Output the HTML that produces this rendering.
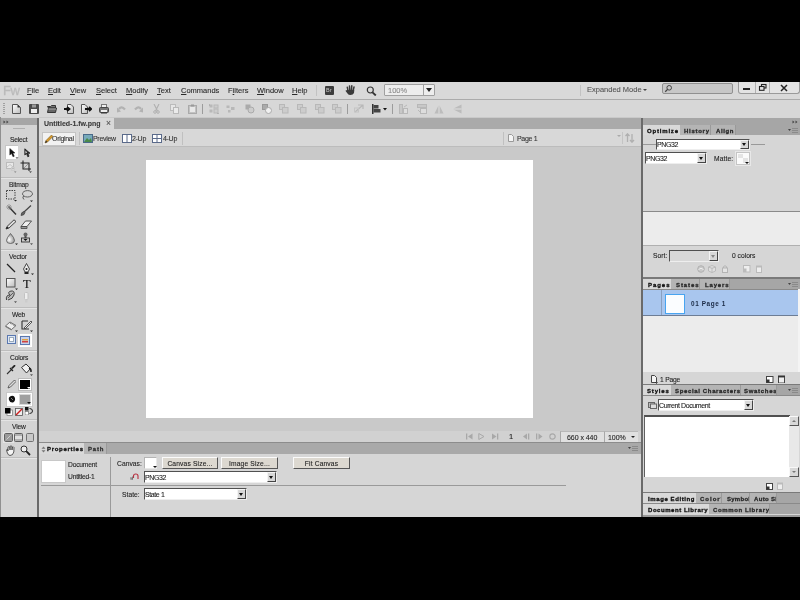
<!DOCTYPE html><html><head><meta charset="utf-8"><style>
*{margin:0;padding:0;box-sizing:border-box}
html,body{width:800px;height:600px;overflow:hidden;background:#000;font-family:"Liberation Sans",sans-serif;font-size:7.5px;color:#2a2a2a}
div,span,svg{position:absolute}
span.u{position:static;text-decoration:underline}
.t{line-height:1;white-space:nowrap;will-change:transform;-webkit-text-stroke:0.1px currentColor}
.b{font-weight:bold}
.c{font-size:6.7px;letter-spacing:-0.2px}
.tab{will-change:transform;position:absolute;font-weight:bold;font-size:6px;letter-spacing:0.8px;line-height:1;white-space:nowrap;color:#111;-webkit-text-stroke:0.3px currentColor}
</style></head><body>
<div style="left:0px;top:82px;width:800px;height:435px;background:#d5d5d5"></div>
<div style="left:0px;top:82px;width:800px;height:17px;background:#d9d9d9"></div>
<div style="left:0px;top:99px;width:800px;height:1px;background:#ababab"></div>
<div class="t" style="left:2.5px;top:83.6px;font-size:13px;color:#bababa;letter-spacing:-0.4px;-webkit-text-stroke:0.3px #bababa">Fw</div>
<div class="t" style="left:27px;top:86.7px;color:#2a2a2a"><span class="u">F</span>ile</div>
<div class="t" style="left:48px;top:86.7px;color:#2a2a2a"><span class="u">E</span>dit</div>
<div class="t" style="left:70px;top:86.7px;color:#2a2a2a"><span class="u">V</span>iew</div>
<div class="t" style="left:96px;top:86.7px;color:#2a2a2a"><span class="u">S</span>elect</div>
<div class="t" style="left:126px;top:86.7px;color:#2a2a2a"><span class="u">M</span>odify</div>
<div class="t" style="left:157px;top:86.7px;color:#2a2a2a"><span class="u">T</span>ext</div>
<div class="t" style="left:181px;top:86.7px;color:#2a2a2a"><span class="u">C</span>ommands</div>
<div class="t" style="left:228px;top:86.7px;color:#2a2a2a">F<span class="u">i</span>lters</div>
<div class="t" style="left:257px;top:86.7px;color:#2a2a2a"><span class="u">W</span>indow</div>
<div class="t" style="left:292px;top:86.7px;color:#2a2a2a"><span class="u">H</span>elp</div>
<div style="left:316px;top:85px;width:1px;height:11px;background:#c2c2c2"></div>
<div style="left:325px;top:86px;width:9px;height:9px;background:#3c3c3c;border-radius:1px"></div>
<div class="t" style="left:326.3px;top:88.2px;font-size:5.5px;color:#c8c8c8;-webkit-text-stroke:0">Br</div>
<svg style="left:345px;top:85px" width="11" height="11" viewBox="0 0 11 11"><path d="M3 5.5 L2.3 2.2 M4.8 5 L4.5 1 M6.5 5 L6.8 0.8 M8.2 5.5 L9 2" stroke="#3a3a3a" stroke-width="1.5" fill="none" stroke-linecap="round"/><path d="M2.5 5 L9.3 5 L9 8 Q8 10 5.5 10 Q3.5 10 2.5 8.5 L0.6 6 Q0.5 5 1.5 5.2Z" fill="#3a3a3a"/></svg>
<svg style="left:366px;top:86px" width="11" height="10" viewBox="0 0 11 10"><circle cx="4.3" cy="4" r="3" stroke="#333" stroke-width="1.15" fill="none"/><path d="M6.5 6.3 L9.8 9.5" stroke="#333" stroke-width="1.8"/></svg>
<div style="left:384px;top:84px;width:51px;height:12px;background:#ededed;border:1px solid #a0a0a0;border-radius:1px"></div>
<div class="t" style="left:388px;top:86.5px;color:#8a8a8a">100%</div>
<div style="left:423px;top:85px;width:1px;height:10px;background:#a0a0a0"></div>
<div style="left:426px;top:88px;width:0px;height:0px;border-left:3px solid transparent;border-right:3px solid transparent;border-top:4px solid #222"></div>
<div style="left:580px;top:85px;width:1px;height:11px;background:#c2c2c2"></div>
<div class="t" style="left:587px;top:86px;color:#555">Expanded Mode</div>
<div style="left:643px;top:89px;width:0px;height:0px;border-left:2px solid transparent;border-right:2px solid transparent;border-top:2px solid #444"></div>
<div style="left:662px;top:83px;width:71px;height:11px;background:#c7c7c7;border:1px solid #909090;border-radius:2px"></div>
<svg style="left:664px;top:84px" width="9" height="9" viewBox="0 0 9 9"><circle cx="5.2" cy="3.8" r="2.3" stroke="#444" stroke-width="1" fill="none"/><path d="M3.6 5.4 L1.2 7.8" stroke="#444" stroke-width="1.3"/></svg>
<div style="left:738px;top:82px;width:62px;height:12px;background:#e3e3e3;border:1px solid #9a9a9a;border-top:none;border-radius:0 0 3px 3px"></div>
<div style="left:755px;top:82px;width:1px;height:11px;background:#b0b0b0"></div>
<div style="left:769px;top:82px;width:1px;height:11px;background:#b0b0b0"></div>
<div style="left:743px;top:88px;width:7px;height:2px;background:#222"></div>
<svg style="left:758px;top:83px" width="9" height="9" viewBox="0 0 9 9"><rect x="3.5" y="1.5" width="4.5" height="3.5" stroke="#222" stroke-width="1.1" fill="none"/><rect x="1.5" y="3.5" width="4.5" height="3.8" stroke="#222" stroke-width="1.1" fill="#e3e3e3"/></svg>
<svg style="left:780px;top:84px" width="8" height="8" viewBox="0 0 8 8"><path d="M1 1 L7 7 M7 1 L1 7" stroke="#222" stroke-width="1.5"/></svg>
<div style="left:0px;top:100px;width:800px;height:17px;background:#d7d7d7"></div>
<div style="left:3px;top:103px;width:2px;height:11px;background:repeating-linear-gradient(#a0a0a0 0 1px,transparent 1px 2px)"></div>
<svg style="left:0;top:0" width="1" height="1"><defs><linearGradient id="pg" x1="0" y1="0" x2="1" y2="1"><stop offset="0" stop-color="#fff"/><stop offset="1" stop-color="#bbb"/></linearGradient></defs></svg>
<svg style="left:12px;top:104px" width="9" height="10" viewBox="0 0 9 10"><path d="M0.5 0.5 L5.5 0.5 L8.5 3.5 L8.5 9.5 L0.5 9.5Z" fill="url(#pg)" stroke="#555" stroke-width="1"/><path d="M5.5 0.5 L8.5 3.5 L5.5 3.5Z" fill="#333"/></svg>
<svg style="left:29px;top:104px" width="10" height="10" viewBox="0 0 10 10"><rect x="0" y="0" width="10" height="10" rx="1" fill="#4a4a4a"/><rect x="2" y="5" width="6" height="4" fill="#eee"/><rect x="3" y="0.5" width="4" height="3" fill="#999"/></svg>
<svg style="left:47px;top:105px" width="10" height="8" viewBox="0 0 10 8"><path d="M0.5 1.5 L3.5 1.5 L4.5 0.5 L8.5 0.5 L8.5 3 L1.5 3Z" fill="#777" stroke="#333"/><path d="M0.5 7.5 L1.5 3 L9.5 3 L8.5 7.5Z" fill="#666" stroke="#333"/><path d="M1.5 4 L9 4" stroke="#aaa"/></svg>
<svg style="left:64px;top:104px" width="10" height="10" viewBox="0 0 10 10"><path d="M3.5 0.5 L7 0.5 L9.5 3 L9.5 9.5 L3.5 9.5Z" fill="url(#pg)" stroke="#555"/><path d="M0 5 L4.5 5 M3 3 L5.5 5 L3 7" stroke="#111" stroke-width="1.8" fill="none"/></svg>
<svg style="left:81px;top:104px" width="11" height="10" viewBox="0 0 11 10"><path d="M0.5 0.5 L4 0.5 L6.5 3 L6.5 9.5 L0.5 9.5Z" fill="url(#pg)" stroke="#555"/><path d="M4 5 L9.5 5 M8 3 L10.3 5 L8 7" stroke="#111" stroke-width="1.8" fill="none"/></svg>
<svg style="left:99px;top:104px" width="10" height="10" viewBox="0 0 10 10"><rect x="2.5" y="0.5" width="5" height="4" fill="#eee" stroke="#777"/><rect x="0.5" y="3.5" width="9" height="5" rx="1" fill="#777" stroke="#444"/><rect x="2" y="6" width="6" height="2" fill="#eee"/><rect x="2" y="8.5" width="6" height="1" fill="#333"/></svg>
<svg style="left:117px;top:105px" width="9" height="8" viewBox="0 0 9 8"><path d="M2 4 Q4.5 0.5 8 4.5" stroke="#b2b2b2" stroke-width="2.2" fill="none"/><path d="M0 2.5 L4 6.5 L0 7.5Z" fill="#b2b2b2"/></svg>
<svg style="left:134px;top:105px" width="9" height="8" viewBox="0 0 9 8"><path d="M7 4 Q4.5 0.5 1 4.5" stroke="#b2b2b2" stroke-width="2.2" fill="none"/><path d="M9 2.5 L5 6.5 L9 7.5Z" fill="#b2b2b2"/></svg>
<svg style="left:153px;top:104px" width="7" height="10" viewBox="0 0 7 10"><path d="M1 0 L4.5 7 M6 0 L2.5 7" stroke="#b0b0b0" stroke-width="1.1"/><circle cx="2" cy="8" r="1.3" stroke="#b0b0b0" fill="none"/><circle cx="5" cy="8" r="1.3" stroke="#b0b0b0" fill="none"/></svg>
<svg style="left:170px;top:104px" width="9" height="10" viewBox="0 0 9 10"><rect x="0.5" y="0.5" width="5" height="6" fill="#e6e6e6" stroke="#bbb"/><rect x="3.5" y="3.5" width="5" height="6" fill="#eaeaea" stroke="#b8b8b8"/></svg>
<svg style="left:188px;top:104px" width="9" height="10" viewBox="0 0 9 10"><rect x="0.5" y="1.5" width="8" height="8" fill="#c2c2c2" stroke="#aaa"/><rect x="2" y="3" width="5" height="5" fill="#e8e8e8"/><rect x="3" y="0.5" width="3" height="2" fill="#999"/></svg>
<div style="left:202px;top:104px;width:1px;height:10px;background:#9c9c9c"></div>
<svg style="left:209px;top:104px" width="10" height="10" viewBox="0 0 10 10"><rect x="0.5" y="0.5" width="3" height="3" fill="#b8b8b8"/><rect x="5" y="1" width="4" height="3" fill="#ccc" stroke="#b8b8b8"/><rect x="0.5" y="5.5" width="3" height="3" fill="#b8b8b8"/><rect x="5" y="5" width="4" height="4" fill="#ccc" stroke="#b8b8b8"/><path d="M0 0 L0 2 M10 10 L8 10" stroke="#999"/></svg>
<svg style="left:226px;top:104px" width="10" height="10" viewBox="0 0 10 10"><rect x="0.5" y="1.5" width="3" height="2.5" fill="#b8b8b8"/><rect x="5" y="3" width="3.5" height="3" fill="#b8b8b8"/><rect x="2" y="6" width="2.5" height="2.5" fill="#b8b8b8"/></svg>
<svg style="left:245px;top:104px" width="10" height="10" viewBox="0 0 10 10"><rect x="0.5" y="0.5" width="5" height="5" fill="#aaa"/><circle cx="6" cy="6" r="3" fill="#ccc" stroke="#aaa"/></svg>
<svg style="left:262px;top:104px" width="10" height="10" viewBox="0 0 10 10"><rect x="0.5" y="0.5" width="5" height="5" fill="#aaa" stroke="#999"/><circle cx="6.5" cy="6.5" r="3" fill="#f0f0f0" stroke="#aaa"/></svg>
<svg style="left:279px;top:104px" width="10" height="10" viewBox="0 0 10 10"><rect x="0.5" y="0.5" width="5" height="5" fill="#ccc" stroke="#b8b8b8"/><rect x="3.5" y="3.5" width="5.5" height="5.5" fill="#ccc" stroke="#b8b8b8"/></svg>
<svg style="left:297px;top:104px" width="10" height="10" viewBox="0 0 10 10"><rect x="0.5" y="0.5" width="5" height="5" fill="#ccc" stroke="#b8b8b8"/><rect x="3.5" y="3.5" width="5.5" height="5.5" fill="#ccc" stroke="#b8b8b8"/></svg>
<svg style="left:315px;top:104px" width="10" height="10" viewBox="0 0 10 10"><rect x="0.5" y="0.5" width="5" height="5" fill="#ccc" stroke="#b8b8b8"/><rect x="3.5" y="3.5" width="5.5" height="5.5" fill="#ccc" stroke="#b8b8b8"/></svg>
<svg style="left:332px;top:104px" width="10" height="10" viewBox="0 0 10 10"><rect x="0.5" y="0.5" width="5" height="5" fill="#ccc" stroke="#b8b8b8"/><rect x="3.5" y="3.5" width="5.5" height="5.5" fill="#ccc" stroke="#b8b8b8"/></svg>
<div style="left:347px;top:104px;width:1px;height:10px;background:#9c9c9c"></div>
<svg style="left:354px;top:104px" width="10" height="10" viewBox="0 0 10 10"><path d="M1 8 L9 1 M4 1 L9 1 L9 5" stroke="#b8b8b8" stroke-width="1.2" fill="none"/><rect x="0.5" y="4" width="4" height="4" fill="none" stroke="#c4c4c4"/></svg>
<svg style="left:372px;top:104px" width="15" height="10" viewBox="0 0 15 10"><rect x="0" y="0" width="1.5" height="10" fill="#333"/><rect x="1.5" y="1" width="5" height="3.5" fill="#444"/><rect x="1.5" y="5" width="7" height="3.5" fill="#444"/><path d="M11 4 L15 4 L13 6.5Z" fill="#111"/></svg>
<div style="left:392px;top:104px;width:1px;height:10px;background:#9c9c9c"></div>
<svg style="left:399px;top:104px" width="10" height="10" viewBox="0 0 10 10"><rect x="0.5" y="0.5" width="3" height="9" fill="#c8c8c8" stroke="#b8b8b8"/><rect x="4.5" y="4.5" width="4" height="5" fill="#ddd" stroke="#b8b8b8"/><path d="M5 3 L8 1" stroke="#b8b8b8"/></svg>
<svg style="left:417px;top:104px" width="10" height="10" viewBox="0 0 10 10"><rect x="0.5" y="0.5" width="9" height="3" fill="#c8c8c8" stroke="#b8b8b8"/><rect x="3.5" y="4.5" width="6" height="5" fill="#ddd" stroke="#b8b8b8"/><path d="M1 6 L3 8" stroke="#b8b8b8"/></svg>
<svg style="left:434px;top:104px" width="10" height="10" viewBox="0 0 10 10"><path d="M5 0.5 L9.5 9.5 L0.5 9.5Z" fill="#bcbcbc"/><path d="M5 0.5 L5 9.5" stroke="#e0e0e0"/></svg>
<svg style="left:452px;top:104px" width="10" height="10" viewBox="0 0 10 10"><path d="M9.5 0.5 L0.5 5 L9.5 9.5Z" fill="#bcbcbc"/><path d="M0.5 5 L9.5 5" stroke="#e0e0e0"/></svg>
<div style="left:0px;top:117px;width:37px;height:400px;background:#d4d4d4"></div>
<div style="left:0px;top:118px;width:37px;height:7px;background:#a6a6a6"></div>
<div style="left:0px;top:117px;width:1px;height:400px;background:#909090"></div>
<svg style="left:3px;top:120px" width="6" height="4" viewBox="0 0 6 4"><path d="M0.5 0.5 L2.5 2 L0.5 3.5Z M3.5 0.5 L5.5 2 L3.5 3.5Z" fill="#444"/></svg>
<div style="left:13px;top:128px;width:12px;height:1px;background:#b0b0b0"></div>
<div class="t" style="left:9.5px;top:136.5px;color:#1e1e1e;font-size:6.7px;letter-spacing:-0.2px">Select</div>
<div class="t" style="left:8.5px;top:182.0px;color:#1e1e1e;font-size:6.7px;letter-spacing:-0.2px">Bitmap</div>
<div class="t" style="left:8.5px;top:254.0px;color:#1e1e1e;font-size:6.7px;letter-spacing:-0.2px">Vector</div>
<div class="t" style="left:11.5px;top:312.0px;color:#1e1e1e;font-size:6.7px;letter-spacing:-0.2px">Web</div>
<div class="t" style="left:9.5px;top:355.0px;color:#1e1e1e;font-size:6.7px;letter-spacing:-0.2px">Colors</div>
<div class="t" style="left:11.5px;top:424.0px;color:#1e1e1e;font-size:6.7px;letter-spacing:-0.2px">View</div>
<div style="left:1px;top:177px;width:36px;height:1px;background:#bdbdbd"></div>
<div style="left:1px;top:178px;width:36px;height:1px;background:#e4e4e4"></div>
<div style="left:1px;top:249px;width:36px;height:1px;background:#bdbdbd"></div>
<div style="left:1px;top:250px;width:36px;height:1px;background:#e4e4e4"></div>
<div style="left:1px;top:307px;width:36px;height:1px;background:#bdbdbd"></div>
<div style="left:1px;top:308px;width:36px;height:1px;background:#e4e4e4"></div>
<div style="left:1px;top:350px;width:36px;height:1px;background:#bdbdbd"></div>
<div style="left:1px;top:351px;width:36px;height:1px;background:#e4e4e4"></div>
<div style="left:1px;top:419px;width:36px;height:1px;background:#bdbdbd"></div>
<div style="left:1px;top:420px;width:36px;height:1px;background:#e4e4e4"></div>
<div style="left:1px;top:457px;width:36px;height:1px;background:#bdbdbd"></div>
<div style="left:1px;top:458px;width:36px;height:1px;background:#e4e4e4"></div>
<div style="left:37px;top:118px;width:2px;height:399px;background:#6a6a6a"></div>
<div style="left:5px;top:145px;width:13px;height:14px;background:#fff;border-top:1px solid #c6c6c6;border-left:1px solid #c6c6c6"></div>
<svg style="left:8.5px;top:148px" width="10" height="11" viewBox="0 0 10 11"><path d="M0.8 0.5 L0.8 7 L2.5 5.5 L4 8.8 L5.3 8.2 L3.9 5 L6 5Z" fill="#111" stroke="#222" stroke-width="0.5"/><path d="M6.5 9.5 L9.5 9.5 L8 10.8Z" fill="#222"/></svg>
<svg style="left:23.5px;top:148px" width="7" height="10" viewBox="0 0 7 10"><path d="M0.8 0.8 L0.8 7 L2.5 5.6 L3.8 8.8 L5 8.2 L3.8 5.2 L6 5.2Z" fill="#333" stroke="#111" stroke-width="0.7"/><path d="M1.5 2.5 L1.5 5.5 L3 4.5Z" fill="#eee"/></svg>
<svg style="left:6px;top:162px" width="11" height="11" viewBox="0 0 11 11"><rect x="0.5" y="0.5" width="7" height="6" fill="#e8e8e8" stroke="#bbb"/><path d="M1 5 L4 2.5 L7 5" stroke="#c4c4c4" fill="none"/><rect x="5.5" y="5.5" width="3" height="3" fill="none" stroke="#ccc"/><path d="M8 9.5 L10.5 9.5 L9.2 10.8Z" fill="#777"/></svg>
<svg style="left:20px;top:160px" width="12" height="13" viewBox="0 0 12 13"><path d="M3 0.5 L3 9 L11 9 M0.5 3 L9 3 L9 11" stroke="#222" stroke-width="1.05" fill="none"/><path d="M4 8 L8 4" stroke="#888" stroke-width="0.8"/><path d="M9 11.5 L12 11.5 L10.5 12.8Z" fill="#222"/></svg>
<svg style="left:6px;top:190px" width="11" height="12" viewBox="0 0 11 12"><rect x="0.5" y="0.5" width="8.5" height="8.5" fill="none" stroke="#444" stroke-dasharray="1.5 1"/><path d="M8 10 L11 10 L9.5 11.5Z" fill="#222"/></svg>
<svg style="left:21px;top:190px" width="12" height="12" viewBox="0 0 12 12"><ellipse cx="6.5" cy="3.8" rx="5" ry="3.2" fill="none" stroke="#555" stroke-width="0.9"/><path d="M2.5 6 Q1 8 3 9.5" stroke="#555" fill="none"/><path d="M9 10.5 L12 10.5 L10.5 12Z" fill="#222"/></svg>
<svg style="left:6px;top:204px" width="11" height="12" viewBox="0 0 11 12"><path d="M3 3 L10 10.5" stroke="#333" stroke-width="1.4"/><path d="M3 0 L3 6 M0 3 L6 3 M1 1 L5 5 M5 1 L1 5" stroke="#777" stroke-width="0.6"/></svg>
<svg style="left:20px;top:205px" width="12" height="11" viewBox="0 0 12 11"><path d="M11 0.5 L4 7" stroke="#444" stroke-width="1.2"/><path d="M1 10.5 Q1 7 4 6.5 L5 7.5 Q4.5 10.5 1 10.5Z" fill="#666" stroke="#333" stroke-width="0.6"/></svg>
<svg style="left:5px;top:219px" width="12" height="11" viewBox="0 0 12 11"><path d="M1 10 L2 7.5 L9 0.8 L11 2.5 L4 9Z" fill="#ddd" stroke="#333" stroke-width="0.9"/><path d="M1 10 L2 7.5 L4 9Z" fill="#222"/></svg>
<svg style="left:20px;top:220px" width="12" height="10" viewBox="0 0 12 10"><path d="M1 6.5 L5.5 1 L11.5 1 L7 6.5Z" fill="#f0f0f0" stroke="#444" stroke-width="0.9"/><path d="M1 6.5 L7 6.5 L7 8.5 L1 8.5Z" fill="#999" stroke="#444" stroke-width="0.8"/></svg>
<svg style="left:6px;top:233px" width="12" height="12" viewBox="0 0 12 12"><defs><radialGradient id="dg" cx="0.35" cy="0.6" r="0.7"><stop offset="0" stop-color="#fff"/><stop offset="1" stop-color="#888"/></radialGradient></defs><path d="M4.5 0.5 Q8.5 5 8.5 7.5 Q8.5 10.5 4.5 10.5 Q0.5 10.5 0.5 7.5 Q0.5 5 4.5 0.5Z" fill="url(#dg)" stroke="#555" stroke-width="0.8"/><path d="M9 10.5 L12 10.5 L10.5 12Z" fill="#222"/></svg>
<svg style="left:20px;top:232px" width="13" height="13" viewBox="0 0 13 13"><circle cx="5.5" cy="2.5" r="2" fill="#666"/><rect x="4.5" y="4" width="2" height="2" fill="#555"/><rect x="1.5" y="6" width="8" height="4" fill="#ccc" stroke="#333" stroke-width="0.9"/><path d="M3.5 7 L7.5 7 L5.5 9Z" fill="#111"/><path d="M10 11.5 L13 11.5 L11.5 12.8Z" fill="#222"/></svg>
<svg style="left:6px;top:263px" width="10" height="10" viewBox="0 0 10 10"><path d="M1 1 L9 9" stroke="#222" stroke-width="1.2"/></svg>
<svg style="left:22px;top:263px" width="12" height="12" viewBox="0 0 12 12"><path d="M4.5 0.5 L1.5 6 L3 9 L6 9 L7.5 6Z" fill="#eee" stroke="#333" stroke-width="0.9"/><circle cx="4.5" cy="6" r="1" fill="#222"/><rect x="2.5" y="9" width="4" height="2" fill="#222"/><path d="M9 10.5 L12 10.5 L10.5 12Z" fill="#222"/></svg>
<svg style="left:6px;top:278px" width="12" height="12" viewBox="0 0 12 12"><rect x="0.5" y="0.5" width="8.5" height="8.5" fill="url(#pg)" stroke="#555"/><path d="M9 10.5 L12 10.5 L10.5 12Z" fill="#222"/></svg>
<div class="t" style="left:22.5px;top:278px;font-family:'Liberation Serif',serif;font-size:12.5px;color:#111">T</div>
<svg style="left:5px;top:290px" width="12" height="13" viewBox="0 0 12 13"><path d="M1.5 10 Q0.5 5 5 5 Q2 2 6 1 Q10 0.5 9 5 Q8 9 3 10" fill="#bbb" stroke="#333" stroke-width="0.9"/><path d="M3 8 L8 3" stroke="#444" stroke-width="0.8"/><path d="M9 11.5 L12 11.5 L10.5 12.8Z" fill="#222"/></svg>
<svg style="left:24px;top:292px" width="5" height="11" viewBox="0 0 5 11"><rect x="0.5" y="0.5" width="3.5" height="7" rx="1" fill="#eee" stroke="#c2c2c2"/><rect x="1" y="7.5" width="2.5" height="3" fill="#ccc"/></svg>
<svg style="left:5px;top:320px" width="13" height="12" viewBox="0 0 13 12"><path d="M0.5 6 L5 2 L11 5.5 L6.5 9.5Z" fill="#eee" stroke="#555" stroke-width="0.8"/><path d="M0.5 6 L6.5 9.5 L6.5 10.5 L0.5 7Z" fill="#777"/><path d="M5 3 L10 6" stroke="#444" stroke-width="0.8" stroke-dasharray="1 0.7"/><path d="M10 10.5 L13 10.5 L11.5 12Z" fill="#222"/></svg>
<svg style="left:21px;top:320px" width="12" height="12" viewBox="0 0 12 12"><path d="M1 1 L7 1 M1 1 L1 9 L8 9" stroke="#333" stroke-width="1.1" fill="none"/><path d="M3 8 L10 1 L11 2 L4 9Z" fill="#eee" stroke="#333" stroke-width="0.8"/><path d="M9 10.5 L12 10.5 L10.5 12Z" fill="#222"/></svg>
<svg style="left:7px;top:335px" width="9" height="9" viewBox="0 0 9 9"><rect x="0.5" y="0.5" width="8" height="8" fill="#dde6f4" stroke="#5a78b0" stroke-width="1"/><rect x="2.5" y="2.5" width="4" height="4" fill="#fff" stroke="#9ab"/></svg>
<div style="left:18px;top:334px;width:14px;height:13px;background:#f6f6f6;border:1px solid #fff"></div>
<svg style="left:20px;top:336px" width="10" height="9" viewBox="0 0 10 9"><rect x="0.5" y="0.5" width="9" height="8" fill="#c8d2ea" stroke="#5a78b0" stroke-width="1"/><rect x="2" y="3" width="6" height="1.5" fill="#e0a040"/><rect x="2" y="5" width="6" height="1.5" fill="#d04040"/></svg>
<svg style="left:6px;top:364px" width="10" height="11" viewBox="0 0 10 11"><path d="M1 10 L6 5" stroke="#333" stroke-width="1.1"/><path d="M5 4 L8 1 Q9.5 0.5 9.5 2 L6.5 5Z" fill="#222"/><path d="M4 4 L7 7" stroke="#222" stroke-width="1.3"/></svg>
<svg style="left:20px;top:363px" width="13" height="13" viewBox="0 0 13 13"><path d="M1.5 4.5 L6 1 L10.5 5.5 L6.5 10 Z" fill="#f2f2f2" stroke="#333" stroke-width="1"/><path d="M9 5 Q11.5 6 11 9" stroke="#222" stroke-width="1.5" fill="none"/><path d="M10 11.5 L13 11.5 L11.5 12.8Z" fill="#222"/></svg>
<svg style="left:7px;top:379px" width="9" height="10" viewBox="0 0 9 10"><path d="M1 9 L2 6.5 L7.5 1 L9 2.5 L3.5 8Z" fill="#ddd" stroke="#444" stroke-width="0.8"/></svg>
<div style="left:19px;top:379px;width:12px;height:11px;background:#000;border:1px solid #fff;outline:1px solid #bbb"></div>
<div style="left:27px;top:387px;width:0px;height:0px;border-left:2px solid transparent;border-right:2px solid transparent;border-top:2px solid #fff"></div>
<div style="left:6px;top:392px;width:27px;height:15px;background:#fff;border:1px solid #c8c8c8"></div>
<svg style="left:8px;top:395px" width="8" height="8" viewBox="0 0 8 8"><path d="M1 5 Q0 2 3 1 Q6 0 7 3 Q7.5 6 5 7.5 Q2 8 1 5Z" fill="#111"/><path d="M3 3 L5 5" stroke="#999" stroke-width="0.8"/></svg>
<div style="left:19px;top:394px;width:12px;height:11px;background:#a0a0a0;border:1px solid #d8d8d8"></div>
<div style="left:27px;top:402px;width:0px;height:0px;border-left:2px solid transparent;border-right:2px solid transparent;border-top:2px solid #111"></div>
<svg style="left:5px;top:408px" width="8" height="8" viewBox="0 0 8 8"><rect x="2" y="2" width="5.5" height="5.5" fill="#fff" stroke="#777" stroke-width="0.7"/><rect x="0" y="0" width="5.5" height="5.5" fill="#000"/></svg>
<svg style="left:15px;top:408px" width="8" height="8" viewBox="0 0 8 8"><rect x="0.5" y="0.5" width="7" height="7" fill="#eee" stroke="#555" stroke-width="0.8"/><path d="M1 7 L7 1" stroke="#d02020" stroke-width="1.4"/></svg>
<svg style="left:25px;top:407px" width="8" height="8" viewBox="0 0 8 8"><rect x="0" y="0" width="3.5" height="3.5" fill="#111"/><rect x="0" y="4.5" width="3.5" height="3.5" fill="#fff" stroke="#555" stroke-width="0.6"/><path d="M4.5 1.5 Q7.5 1.5 7.5 4 Q7.5 6.5 4.5 6.5" stroke="#222" fill="none" stroke-width="1"/></svg>
<div style="left:3px;top:432px;width:11px;height:11px;background:#fafafa;border:1px solid #e4e4e4"></div>
<svg style="left:4px;top:433px" width="9" height="9" viewBox="0 0 9 9"><rect x="0.5" y="0.5" width="8" height="8" rx="1" fill="#9a9a9a" stroke="#555" stroke-width="0.9"/><path d="M2.5 6.5 L6.5 2.5" stroke="#ddd" stroke-width="0.8"/></svg>
<svg style="left:14px;top:433px" width="9" height="9" viewBox="0 0 9 9"><rect x="0.5" y="0.5" width="8" height="8" rx="1" fill="#b0b0b0" stroke="#555" stroke-width="0.9"/><rect x="1" y="3" width="7" height="3" fill="#e0e0e0"/></svg>
<svg style="left:26px;top:433px" width="8" height="9" viewBox="0 0 8 9"><rect x="0.5" y="0.5" width="7" height="8" rx="1" fill="#c8c8c8" stroke="#666" stroke-width="0.9"/></svg>
<svg style="left:5px;top:445px" width="11" height="11" viewBox="0 0 11 11"><path d="M2 7 Q1 4 2.5 4 L3 6 L3 2 Q4 1 4.8 2 L5 5 L5.2 1.2 Q6 0.5 6.8 1.2 L7 5 L7.5 2 Q8.5 1.5 9 2.5 L8.8 7 Q8 10.5 5 10.5 Q3 10.5 2 7Z" fill="#f4f4f4" stroke="#333" stroke-width="0.8"/></svg>
<svg style="left:20px;top:445px" width="11" height="11" viewBox="0 0 11 11"><circle cx="4" cy="4" r="3" fill="#eee" stroke="#333" stroke-width="1"/><path d="M6.2 6.2 L10 10" stroke="#222" stroke-width="1.8"/></svg>
<div style="left:39px;top:117px;width:602px;height:326px;background:#c9c9c9"></div>
<div style="left:39px;top:118px;width:602px;height:11px;background:#aaaaaa"></div>
<div style="left:39px;top:118px;width:75px;height:11px;background:#d8d8d8"></div>
<div class="t" style="left:44px;top:120px;font-weight:bold;font-size:7px;color:#3a3a3a">Untitled-1.fw.png</div>
<div class="t" style="left:106px;top:119px;font-size:8.5px;color:#555">×</div>
<div style="left:39px;top:129px;width:602px;height:18px;background:#d8d8d8"></div>
<div style="left:39px;top:146px;width:602px;height:1px;background:#bcbcbc"></div>
<div style="left:42px;top:132px;width:34px;height:14px;background:#f2f2f2;border:1px solid #c4c4c4"></div>
<svg style="left:44px;top:134px" width="9" height="10" viewBox="0 0 9 10"><path d="M1 9 L2 6.5 L7.5 1 L9 2.5 L3.5 8Z" fill="#d89a2a" stroke="#7a5a20" stroke-width="0.6"/><path d="M1 9 L2 6.5 L3.5 8Z" fill="#333"/></svg>
<div class="t" style="left:52px;top:135px;color:#333;font-size:7px;letter-spacing:-0.3px">Original</div>
<div style="left:79px;top:132px;width:1px;height:13px;background:#c0c0c0"></div>
<svg style="left:83px;top:134px" width="10" height="9" viewBox="0 0 10 9"><rect x="0.5" y="0.5" width="9" height="8" fill="#7ab" stroke="#4a6a8a"/><path d="M1 8 L4 4 L6 6 L8 4 L9 8Z" fill="#4a8a4a"/></svg>
<div class="t" style="left:93px;top:135px;color:#333;font-size:7px;letter-spacing:-0.3px">Preview</div>
<svg style="left:122px;top:134px" width="10" height="9" viewBox="0 0 10 9"><rect x="0.5" y="0.5" width="9" height="8" fill="#fff" stroke="#5a6a8a"/><path d="M5 0.5 L5 8.5" stroke="#5a6a8a"/></svg>
<div class="t" style="left:132px;top:135px;color:#333;font-size:7px;letter-spacing:-0.3px">2-Up</div>
<svg style="left:152px;top:134px" width="10" height="9" viewBox="0 0 10 9"><rect x="0.5" y="0.5" width="9" height="8" fill="#fff" stroke="#5a6a8a"/><path d="M5 0.5 L5 8.5 M0.5 4.5 L9.5 4.5" stroke="#5a6a8a"/></svg>
<div class="t" style="left:163px;top:135px;color:#333;font-size:7px;letter-spacing:-0.3px">4-Up</div>
<div style="left:182px;top:132px;width:1px;height:13px;background:#c0c0c0"></div>
<div style="left:503px;top:132px;width:1px;height:13px;background:#c0c0c0"></div>
<svg style="left:508px;top:134px" width="6" height="8" viewBox="0 0 6 8"><path d="M0.5 0.5 L3.5 0.5 L5.5 2.5 L5.5 7.5 L0.5 7.5Z" fill="#f4f4f4" stroke="#999"/></svg>
<div class="t" style="left:517px;top:135px;color:#333;font-size:7px;letter-spacing:-0.3px">Page 1</div>
<div style="left:617px;top:135px;width:0px;height:0px;border-left:2px solid transparent;border-right:2px solid transparent;border-top:2px solid #aaa"></div>
<div style="left:622px;top:132px;width:1px;height:12px;background:#c4c4c4"></div>
<svg style="left:625px;top:133px" width="11" height="10" viewBox="0 0 11 10"><path d="M2.5 9 L2.5 1 M0.5 3 L2.5 0.8 L4.5 3 M7 1 L7 9 M5 7 L7 9.2 L9 7" stroke="#b0b0b0" stroke-width="1.3" fill="none"/></svg>
<div style="left:146px;top:160px;width:387px;height:258px;background:#fff"></div>
<div style="left:39px;top:431px;width:602px;height:11px;background:#d1d1d1"></div>
<div style="left:39px;top:442px;width:602px;height:1px;background:#8c8c8c"></div>
<svg style="left:466px;top:433px" width="7" height="7" viewBox="0 0 7 7"><rect x="0" y="0.5" width="1.3" height="6" fill="#a8a8a8"/><path d="M6.5 0.5 L2 3.5 L6.5 6.5Z" fill="#a8a8a8"/></svg>
<svg style="left:478px;top:433px" width="7" height="7" viewBox="0 0 7 7"><path d="M0.8 0.5 L6 3.5 L0.8 6.5Z" fill="none" stroke="#a8a8a8"/></svg>
<svg style="left:492px;top:433px" width="7" height="7" viewBox="0 0 7 7"><path d="M0 0.5 L4.5 3.5 L0 6.5Z" fill="#a8a8a8"/><rect x="5" y="0.5" width="1.3" height="6" fill="#a8a8a8"/></svg>
<div class="t" style="left:509px;top:433px;color:#222;font-size:7.5px">1</div>
<svg style="left:523px;top:433px" width="7" height="7" viewBox="0 0 7 7"><path d="M4 0.5 L0 3.5 L4 6.5Z" fill="#a8a8a8"/><rect x="5" y="0.5" width="1.3" height="6" fill="#a8a8a8"/></svg>
<svg style="left:536px;top:433px" width="7" height="7" viewBox="0 0 7 7"><rect x="0" y="0.5" width="1.3" height="6" fill="#a8a8a8"/><path d="M2.5 0.5 L6.5 3.5 L2.5 6.5Z" fill="#a8a8a8"/></svg>
<svg style="left:549px;top:433px" width="7" height="7" viewBox="0 0 7 7"><circle cx="3.5" cy="3.5" r="2.7" fill="none" stroke="#a8a8a8" stroke-width="1.2"/></svg>
<div style="left:560px;top:431px;width:44px;height:11px;background:#e0e0e0;border-left:1px solid #a8a8a8;border-top:1px solid #b8b8b8"></div>
<div class="t" style="left:567px;top:433.5px;color:#222;font-size:7px;letter-spacing:-0.05px">660 x 440</div>
<div style="left:604px;top:431px;width:34px;height:11px;background:#e0e0e0;border-left:1px solid #a8a8a8;border-top:1px solid #b8b8b8"></div>
<div class="t" style="left:608px;top:433.5px;color:#222;font-size:7px;letter-spacing:-0.05px">100%</div>
<div style="left:631px;top:436px;width:0px;height:0px;border-left:2px solid transparent;border-right:2px solid transparent;border-top:2px solid #222"></div>
<div style="left:39px;top:443px;width:602px;height:11px;background:#a9a9a9"></div>
<div style="left:39px;top:443px;width:45px;height:11px;background:#d9d9d9"></div>
<div style="left:84px;top:443px;width:23px;height:11px;background:#b6b6b6;border-right:1px solid #9a9a9a"></div>
<svg style="left:41px;top:446px" width="5" height="7" viewBox="0 0 5 7"><path d="M0.5 2.8 L2.5 0.5 L4.5 2.8Z M0.5 4.2 L2.5 6.5 L4.5 4.2Z" fill="#777"/></svg>
<div class="tab" style="left:47px;top:446px;letter-spacing:0.702px">Properties</div>
<div class="tab" style="left:88px;top:446px;color:#333">Path</div>
<svg style="left:628px;top:445px" width="11" height="7" viewBox="0 0 11 7"><path d="M0 2 L3 2 L1.5 4Z" fill="#444"/><path d="M4 1.5 L10 1.5 M4 3.5 L10 3.5 M4 5.5 L10 5.5" stroke="#8a8a8a" stroke-width="1"/></svg>
<div style="left:39px;top:454px;width:602px;height:63px;background:#d6d6d6"></div>
<div style="left:41px;top:460px;width:25px;height:23px;background:#fff;border:1px solid #c8c8c8"></div>
<div class="t" style="left:68px;top:461.5px;color:#1e1e1e;font-size:6.7px;letter-spacing:-0.2px">Document</div>
<div class="t" style="left:68px;top:473.5px;color:#1e1e1e;font-size:6.7px;letter-spacing:-0.2px">Untitled-1</div>
<div style="left:110px;top:457px;width:1px;height:60px;background:#9a9a9a"></div>
<div style="left:41px;top:485px;width:525px;height:1px;background:#9a9a9a"></div>
<div class="t" style="left:116.5px;top:460.5px;color:#1e1e1e;font-size:6.7px;letter-spacing:0.05px">Canvas:</div>
<div style="left:144px;top:457px;width:13px;height:12px;background:#fff;border:1px solid #b4b4b4;border-right-color:#e8e8e8;border-bottom-color:#e8e8e8"></div>
<div style="left:153px;top:466px;width:0px;height:0px;border-left:2px solid transparent;border-right:2px solid transparent;border-top:2px solid #111"></div>
<div style="left:162px;top:457px;width:56px;height:12px;background:#dcd8d0;border-top:1px solid #fafafa;border-left:1px solid #fafafa;border-right:1px solid #555;border-bottom:1px solid #555"></div>
<div class="t" style="left:162px;top:460.6px;width:56px;text-align:center;color:#222;font-size:6.7px;letter-spacing:0.15px">Canvas Size...</div>
<div style="left:221px;top:457px;width:57px;height:12px;background:#dcd8d0;border-top:1px solid #fafafa;border-left:1px solid #fafafa;border-right:1px solid #555;border-bottom:1px solid #555"></div>
<div class="t" style="left:221px;top:460.6px;width:57px;text-align:center;color:#222;font-size:6.7px;letter-spacing:0.15px">Image Size...</div>
<div style="left:293px;top:457px;width:57px;height:12px;background:#dcd8d0;border-top:1px solid #fafafa;border-left:1px solid #fafafa;border-right:1px solid #555;border-bottom:1px solid #555"></div>
<div class="t" style="left:293px;top:460.6px;width:57px;text-align:center;color:#222;font-size:6.7px;letter-spacing:0.15px">Fit Canvas</div>
<svg style="left:130px;top:473px" width="9" height="7" viewBox="0 0 9 7"><path d="M3.5 5 L3.5 3 Q3.5 1 5.8 1 Q8 1 8 3 L8 6" stroke="#b83040" stroke-width="1.1" fill="none"/><path d="M0.5 6 L3 6 M1 4 L1 6.5 M2.5 3.5 L2.5 6.5" stroke="#666" stroke-width="0.8"/></svg>
<div style="left:144px;top:471px;width:133px;height:12px;background:#fff;border-top:1px solid #505050;border-left:1px solid #505050;border-right:1px solid #eee;border-bottom:1px solid #eee"></div>
<div style="left:267px;top:472px;width:9px;height:10px;background:#d8d8d8;border-top:1px solid #f4f4f4;border-left:1px solid #f4f4f4;border-right:1px solid #444;border-bottom:1px solid #444"></div>
<div style="left:269px;top:475.5px;width:0px;height:0px;border-left:2.5px solid transparent;border-right:2.5px solid transparent;border-top:3px solid #111"></div>
<div class="t" style="left:144.8px;top:473.8px;color:#222;font-size:7px;letter-spacing:-0.4px">PNG32</div>
<div class="t" style="left:121.5px;top:492px;color:#1e1e1e;font-size:6.7px;letter-spacing:0.05px">State:</div>
<div style="left:144px;top:488px;width:103px;height:12px;background:#fff;border-top:1px solid #505050;border-left:1px solid #505050;border-right:1px solid #eee;border-bottom:1px solid #eee"></div>
<div style="left:237px;top:489px;width:9px;height:10px;background:#d8d8d8;border-top:1px solid #f4f4f4;border-left:1px solid #f4f4f4;border-right:1px solid #444;border-bottom:1px solid #444"></div>
<div style="left:239px;top:492.5px;width:0px;height:0px;border-left:2.5px solid transparent;border-right:2.5px solid transparent;border-top:3px solid #111"></div>
<div class="t" style="left:144.8px;top:490.8px;color:#222;font-size:7px;letter-spacing:-0.4px">State 1</div>
<div style="left:641px;top:118px;width:2px;height:399px;background:#6a6a6a"></div>
<div style="left:643px;top:117px;width:157px;height:400px;background:#d6d6d6"></div>
<div style="left:643px;top:118px;width:157px;height:7px;background:#a6a6a6"></div>
<svg style="left:792px;top:120px" width="6" height="4" viewBox="0 0 6 4"><path d="M0.5 0.5 L2.5 2 L0.5 3.5Z M3.5 0.5 L5.5 2 L3.5 3.5Z" fill="#444"/></svg>
<div style="left:643px;top:125px;width:157px;height:10px;background:#a6a6a6"></div>
<div style="left:643px;top:125px;width:37px;height:10px;background:#d9d9d9"></div>
<div style="left:643px;top:125px;width:36px;height:10px;overflow:hidden"><div class="tab" style="left:4.00px;top:2.6px;letter-spacing:0.809px;">Optimize</div></div>
<div style="left:680px;top:125px;width:31px;height:10px;background:#b4b4b4;border-right:1px solid #9a9a9a"></div>
<div style="left:680px;top:125px;width:30px;height:10px;overflow:hidden"><div class="tab" style="left:4.00px;top:2.6px;letter-spacing:0.721px;color:#2a2a2a">History</div></div>
<div style="left:711px;top:125px;width:25px;height:10px;background:#b4b4b4;border-right:1px solid #9a9a9a"></div>
<div style="left:711px;top:125px;width:24px;height:10px;overflow:hidden"><div class="tab" style="left:5.00px;top:2.6px;letter-spacing:0.626px;color:#2a2a2a">Align</div></div>
<svg style="left:788px;top:126.5px" width="11" height="7" viewBox="0 0 11 7"><path d="M0 2 L3 2 L1.5 4Z" fill="#444"/><path d="M4 1.5 L10 1.5 M4 3.5 L10 3.5 M4 5.5 L10 5.5" stroke="#8a8a8a" stroke-width="1"/></svg>
<div style="left:643px;top:135px;width:157px;height:142px;background:#d6d6d6"></div>
<div style="left:643px;top:144px;width:13px;height:1px;background:#999"></div>
<div style="left:751px;top:144px;width:14px;height:1px;background:#999"></div>
<div style="left:656px;top:139px;width:94px;height:11px;background:#fff;border-top:1px solid #505050;border-left:1px solid #505050;border-right:1px solid #eee;border-bottom:1px solid #eee"></div>
<div style="left:740px;top:140px;width:9px;height:9px;background:#d8d8d8;border-top:1px solid #f4f4f4;border-left:1px solid #f4f4f4;border-right:1px solid #444;border-bottom:1px solid #444"></div>
<div style="left:742px;top:143.0px;width:0px;height:0px;border-left:2.5px solid transparent;border-right:2.5px solid transparent;border-top:3px solid #111"></div>
<div class="t" style="left:656.8px;top:141.3px;color:#222;font-size:7px;letter-spacing:-0.4px">PNG32</div>
<div style="left:645px;top:152px;width:62px;height:12px;background:#fff;border-top:1px solid #505050;border-left:1px solid #505050;border-right:1px solid #eee;border-bottom:1px solid #eee"></div>
<div style="left:697px;top:153px;width:9px;height:10px;background:#d8d8d8;border-top:1px solid #f4f4f4;border-left:1px solid #f4f4f4;border-right:1px solid #444;border-bottom:1px solid #444"></div>
<div style="left:699px;top:156.5px;width:0px;height:0px;border-left:2.5px solid transparent;border-right:2.5px solid transparent;border-top:3px solid #111"></div>
<div class="t" style="left:645.8px;top:154.8px;color:#222;font-size:7px;letter-spacing:-0.4px">PNG32</div>
<div class="t" style="left:714px;top:156px;color:#1e1e1e;font-size:6.7px;letter-spacing:0.1px">Matte:</div>
<div style="left:736px;top:152px;width:14px;height:13px;background:#fbfbfb;border:1px solid #c4c4c4;outline:1px solid #e8e8e8"></div>
<div style="left:738px;top:154px;width:5px;height:4px;background:#e4e4e4"></div>
<div style="left:743px;top:158px;width:5px;height:5px;background:#e4e4e4"></div>
<div style="left:745px;top:162px;width:0px;height:0px;border-left:2px solid transparent;border-right:2px solid transparent;border-top:2px solid #111"></div>
<div style="left:643px;top:211px;width:157px;height:35px;background:#ececec;border-top:1px solid #8a8a8a;border-bottom:1px solid #b0b0b0"></div>
<div class="t" style="left:653px;top:253px;color:#1e1e1e;font-size:6.7px;letter-spacing:0.05px">Sort:</div>
<div style="left:669px;top:250px;width:50px;height:12px;background:#d8d8d8;border-top:1px solid #505050;border-left:1px solid #505050;border-right:1px solid #eee;border-bottom:1px solid #eee"></div>
<div style="left:709px;top:251px;width:9px;height:10px;background:#d8d8d8;border-top:1px solid #f4f4f4;border-left:1px solid #f4f4f4;border-right:1px solid #444;border-bottom:1px solid #444"></div>
<div style="left:711px;top:254.5px;width:0px;height:0px;border-left:2.5px solid transparent;border-right:2.5px solid transparent;border-top:3px solid #888"></div>
<div class="t" style="left:732px;top:252.5px;color:#1e1e1e;font-size:6.7px;letter-spacing:0px">0 colors</div>
<svg style="left:697px;top:265px" width="8" height="8" viewBox="0 0 8 8"><circle cx="4" cy="4" r="3.3" fill="#c8c8c8" stroke="#b0b0b0"/><path d="M1.5 4.5 Q4 2 6.5 4.5" stroke="#eee" fill="none"/></svg>
<svg style="left:708px;top:265px" width="8" height="8" viewBox="0 0 8 8"><path d="M4 0.5 L7.5 2 L7.5 6 L4 7.5 L0.5 6 L0.5 2Z M0.5 2 L4 3.5 L7.5 2 M4 3.5 L4 7.5" stroke="#b4b4b4" fill="#e0e0e0" stroke-width="0.8"/></svg>
<svg style="left:722px;top:265px" width="6" height="8" viewBox="0 0 6 8"><rect x="0.5" y="3" width="5" height="4.5" fill="#e4e4e4" stroke="#b4b4b4"/><path d="M1.5 3 L1.5 1.5 Q3 0 4.5 1.5 L4.5 3" stroke="#b4b4b4" fill="none"/></svg>
<svg style="left:743px;top:265px" width="8" height="8" viewBox="0 0 8 8"><rect x="0.5" y="0.5" width="6.5" height="6.5" fill="#eee" stroke="#bbb"/><rect x="0.5" y="3.5" width="3" height="3.5" fill="#bbb"/></svg>
<svg style="left:756px;top:265px" width="6" height="8" viewBox="0 0 6 8"><rect x="0.5" y="2" width="5" height="5.5" fill="#eee" stroke="#bbb"/><rect x="0" y="0.5" width="6" height="1.5" fill="#bbb"/></svg>
<div style="left:643px;top:277px;width:157px;height:2px;background:#7a7a7a"></div>
<div style="left:643px;top:279px;width:157px;height:10px;background:#a6a6a6"></div>
<div style="left:643px;top:279px;width:28px;height:10px;background:#d9d9d9"></div>
<div style="left:643px;top:279px;width:27px;height:10px;overflow:hidden"><div class="tab" style="left:4.50px;top:2.6px;letter-spacing:0.956px;">Pages</div></div>
<div style="left:671px;top:279px;width:29px;height:10px;background:#b4b4b4;border-right:1px solid #9a9a9a"></div>
<div style="left:671px;top:279px;width:28px;height:10px;overflow:hidden"><div class="tab" style="left:4.50px;top:2.6px;letter-spacing:0.898px;color:#2a2a2a">States</div></div>
<div style="left:700px;top:279px;width:30px;height:10px;background:#b4b4b4;border-right:1px solid #9a9a9a"></div>
<div style="left:700px;top:279px;width:29px;height:10px;overflow:hidden"><div class="tab" style="left:4.50px;top:2.6px;letter-spacing:0.831px;color:#2a2a2a">Layers</div></div>
<svg style="left:788px;top:280.5px" width="11" height="7" viewBox="0 0 11 7"><path d="M0 2 L3 2 L1.5 4Z" fill="#444"/><path d="M4 1.5 L10 1.5 M4 3.5 L10 3.5 M4 5.5 L10 5.5" stroke="#8a8a8a" stroke-width="1"/></svg>
<div style="left:643px;top:289px;width:157px;height:1px;background:#8a8a8a"></div>
<div style="left:643px;top:290px;width:155px;height:82px;background:#ececec"></div>
<div style="left:643px;top:290px;width:155px;height:25px;background:#a9c6ee"></div>
<div style="left:661px;top:290px;width:1px;height:25px;background:#8aa0c0"></div>
<div style="left:643px;top:315px;width:155px;height:1px;background:#6d7d95"></div>
<div style="left:665px;top:294px;width:20px;height:20px;background:#fbfdff;border:1.5px solid #48a4f0"></div>
<div class="t" style="left:690.5px;top:300.5px;font-weight:bold;font-size:6.4px;color:#1a2a45;letter-spacing:0.6px;-webkit-text-stroke:0">01 Page 1</div>
<div style="left:798px;top:289px;width:2px;height:83px;background:#f4f4f4"></div>
<div style="left:643px;top:372px;width:157px;height:13px;background:#d6d6d6"></div>
<svg style="left:651px;top:375px" width="7" height="9" viewBox="0 0 7 9"><path d="M0.5 0.5 L3.5 0.5 L5.5 2.5 L5.5 7.5 L0.5 7.5Z" fill="#f4f4f4" stroke="#444"/><path d="M4.5 7 L5.5 8.5 L6.5 7" stroke="#222" stroke-width="0.8" fill="none"/></svg>
<div class="t" style="left:660px;top:377px;color:#1e1e1e;font-size:6.7px;letter-spacing:-0.2px">1 Page</div>
<svg style="left:766px;top:376px" width="8" height="7" viewBox="0 0 8 7"><rect x="0.5" y="0.5" width="6.5" height="6" fill="#fff" stroke="#444"/><rect x="0.5" y="3.5" width="3" height="3" fill="#333"/></svg>
<svg style="left:778px;top:375px" width="7" height="8" viewBox="0 0 7 8"><rect x="0.5" y="2" width="6" height="6" fill="#eee" stroke="#444"/><rect x="0" y="0.5" width="7" height="1.5" fill="#333"/></svg>
<div style="left:643px;top:384px;width:157px;height:1px;background:#7a7a7a"></div>
<div style="left:643px;top:385px;width:157px;height:10px;background:#a6a6a6"></div>
<div style="left:643px;top:385px;width:28px;height:10px;background:#d9d9d9"></div>
<div style="left:643px;top:385px;width:27px;height:10px;overflow:hidden"><div class="tab" style="left:4.25px;top:2.6px;letter-spacing:0.814px;">Styles</div></div>
<div style="left:671px;top:385px;width:70px;height:10px;background:#b4b4b4;border-right:1px solid #9a9a9a"></div>
<div style="left:671px;top:385px;width:69px;height:10px;overflow:hidden"><div class="tab" style="left:4.00px;top:2.6px;letter-spacing:0.645px;color:#2a2a2a">Special Characters</div></div>
<div style="left:741px;top:385px;width:36px;height:10px;background:#b4b4b4;border-right:1px solid #9a9a9a"></div>
<div style="left:741px;top:385px;width:35px;height:10px;overflow:hidden"><div class="tab" style="left:3.40px;top:2.6px;letter-spacing:0.689px;color:#2a2a2a">Swatches</div></div>
<svg style="left:788px;top:386.5px" width="11" height="7" viewBox="0 0 11 7"><path d="M0 2 L3 2 L1.5 4Z" fill="#444"/><path d="M4 1.5 L10 1.5 M4 3.5 L10 3.5 M4 5.5 L10 5.5" stroke="#8a8a8a" stroke-width="1"/></svg>
<div style="left:643px;top:395px;width:157px;height:1px;background:#8a8a8a"></div>
<svg style="left:648px;top:402px" width="9" height="7" viewBox="0 0 9 7"><rect x="0.5" y="0.5" width="6" height="5" fill="#bbb" stroke="#666"/><rect x="2.5" y="2" width="6" height="4.5" fill="#ddd" stroke="#666"/></svg>
<div style="left:658px;top:399px;width:96px;height:12px;background:#fff;border-top:1px solid #505050;border-left:1px solid #505050;border-right:1px solid #eee;border-bottom:1px solid #eee"></div>
<div style="left:744px;top:400px;width:9px;height:10px;background:#d8d8d8;border-top:1px solid #f4f4f4;border-left:1px solid #f4f4f4;border-right:1px solid #444;border-bottom:1px solid #444"></div>
<div style="left:746px;top:403.5px;width:0px;height:0px;border-left:2.5px solid transparent;border-right:2.5px solid transparent;border-top:3px solid #111"></div>
<div class="t" style="left:658.8px;top:401.8px;color:#222;font-size:7px;letter-spacing:-0.4px">Current Document</div>
<div style="left:644px;top:415px;width:146px;height:62px;background:#fff;border-top:2px solid #505050;border-left:1px solid #606060"></div>
<div style="left:789px;top:416px;width:10px;height:61px;background:#e8e8e8"></div>
<div style="left:789px;top:416px;width:10px;height:10px;background:#d8d8d8;border-top:1px solid #f8f8f8;border-left:1px solid #f8f8f8;border-right:1px solid #555;border-bottom:1px solid #555"></div>
<div style="left:792px;top:420px;width:0px;height:0px;border-left:2px solid transparent;border-right:2px solid transparent;border-bottom:2px solid #777"></div>
<div style="left:789px;top:467px;width:10px;height:10px;background:#d8d8d8;border-top:1px solid #f8f8f8;border-left:1px solid #f8f8f8;border-right:1px solid #555;border-bottom:1px solid #555"></div>
<div style="left:792px;top:471px;width:0px;height:0px;border-left:2px solid transparent;border-right:2px solid transparent;border-top:2px solid #777"></div>
<svg style="left:766px;top:483px" width="7" height="7" viewBox="0 0 7 7"><rect x="0.5" y="0.5" width="6" height="6" fill="#fff" stroke="#444"/><rect x="0.5" y="3.5" width="3" height="3" fill="#333"/></svg>
<svg style="left:777px;top:482px" width="6" height="8" viewBox="0 0 6 8"><rect x="0.5" y="2" width="5" height="5.5" fill="#eee" stroke="#bbb"/><rect x="0" y="0.5" width="6" height="1.5" fill="#bbb"/></svg>
<div style="left:643px;top:492px;width:157px;height:1px;background:#7a7a7a"></div>
<div style="left:643px;top:493px;width:157px;height:10px;background:#a6a6a6"></div>
<div style="left:643px;top:493px;width:53px;height:10px;background:#d9d9d9"></div>
<div style="left:643px;top:493px;width:52px;height:10px;overflow:hidden"><div class="tab" style="left:4.50px;top:2.6px;letter-spacing:0.597px;">Image Editing</div></div>
<div style="left:696px;top:493px;width:26px;height:10px;background:#b4b4b4;border-right:1px solid #9a9a9a"></div>
<div style="left:696px;top:493px;width:25px;height:10px;overflow:hidden"><div class="tab" style="left:3.80px;top:2.6px;letter-spacing:1.000px;color:#2a2a2a">Color*</div></div>
<div style="left:722px;top:493px;width:28px;height:10px;background:#b4b4b4;border-right:1px solid #9a9a9a"></div>
<div style="left:722px;top:493px;width:27px;height:10px;overflow:hidden"><div class="tab" style="left:5.00px;top:2.6px;letter-spacing:0.266px;color:#2a2a2a">Symbol</div></div>
<div style="left:750px;top:493px;width:27px;height:10px;background:#b4b4b4;border-right:1px solid #9a9a9a"></div>
<div style="left:750px;top:493px;width:26px;height:10px;overflow:hidden"><div class="tab" style="left:4.00px;top:2.6px;letter-spacing:0.334px;color:#2a2a2a">Auto Sl</div></div>
<div style="left:643px;top:503px;width:157px;height:1px;background:#8a8a8a"></div>
<div style="left:643px;top:504px;width:157px;height:10px;background:#a6a6a6"></div>
<div style="left:643px;top:504px;width:66px;height:10px;background:#d9d9d9"></div>
<div style="left:643px;top:504px;width:65px;height:10px;overflow:hidden"><div class="tab" style="left:4.50px;top:2.6px;letter-spacing:0.544px;">Document Library</div></div>
<div style="left:709px;top:504px;width:61px;height:10px;background:#b4b4b4;border-right:1px solid #9a9a9a"></div>
<div style="left:709px;top:504px;width:60px;height:10px;overflow:hidden"><div class="tab" style="left:4.00px;top:2.6px;letter-spacing:0.615px;color:#2a2a2a">Common Library</div></div>
<div style="left:643px;top:515px;width:157px;height:2px;background:#9a9a9a"></div>
</body></html>
